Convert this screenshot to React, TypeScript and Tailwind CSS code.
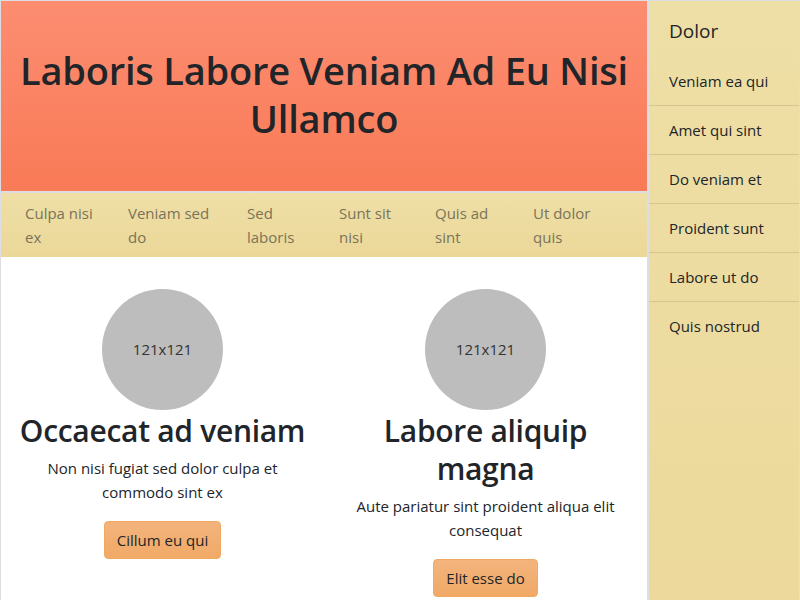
import React from "react";

const navItems = [
  { t: "Culpa nisi ex", w: "w-[103px]" },
  { t: "Veniam sed do", w: "w-[119px]" },
  { t: "Sed laboris", w: "w-[92px]" },
  { t: "Sunt sit nisi", w: "w-[96px]" },
  { t: "Quis ad sint", w: "w-[98px]" },
  { t: "Ut dolor quis", w: "w-[80px]" },
];

const side = ["Veniam ea qui", "Amet qui sint", "Do veniam et", "Proident sunt", "Labore ut do", "Quis nostrud"];

function Card({ title, text, btn }: { title: string; text: string; btn: string }) {
  return (
    <div className="flex flex-col items-center px-[12px] text-center">
      <div className="w-[121px] h-[121px] rounded-full bg-[#bdbdbd] flex items-center justify-center text-[15px] text-[#333]">
        121x121
      </div>
      <h2 className="mt-[2px] text-[30px] leading-[38px] font-semibold tracking-[-0.3px] text-[#212529]">{title}</h2>
      <p className="mt-[6px] text-[15px] leading-[24px] text-[#212529]">{text}</p>
      <button className="mt-[17px] h-[38px] px-[12px] rounded-[4px] bg-gradient-to-b from-[#f3b47d] to-[#f1a966] border border-[#f0a862] text-[15px] text-[#212529]">
        {btn}
      </button>
    </div>
  );
}

export default function App() {
  return (
    <div
      className="w-[800px] h-[600px] bg-[#dcdee3] p-[1px] pb-0 flex gap-[2px] overflow-hidden"
      style={{ fontFamily: '"Open Sans", "Noto Sans", sans-serif' }}
    >
      <div className="w-[646px] flex flex-col">
        <div className="h-[190px] bg-gradient-to-b from-[#fc8d71] to-[#f97a56] flex items-center justify-center px-[12px] pb-[5px]">
          <h1 className="text-[38px] leading-[48px] font-semibold text-[#212529] text-center tracking-[-0.2px]">
            Laboris Labore Veniam Ad Eu Nisi Ullamco
          </h1>
        </div>
        <div className="mt-[2px] h-[64px] bg-gradient-to-b from-[#efdfa6] to-[#ebd899] flex items-center pl-[24px]">
          {navItems.map((n) => (
            <div key={n.t} className={`${n.w} shrink-0 pr-[20px] text-[15px] leading-[24px] text-[#7a735a]`}>
              {n.t}
            </div>
          ))}
        </div>
        <div className="flex-1 bg-white grid grid-cols-2 pt-[32px]">
          <Card title="Occaecat ad veniam" text="Non nisi fugiat sed dolor culpa et commodo sint ex" btn="Cillum eu qui" />
          <Card title="Labore aliquip magna" text="Aute pariatur sint proident aliqua elit consequat" btn="Elit esse do" />
        </div>
      </div>
      <div className="w-[150px] bg-gradient-to-b from-[#eedfa6] to-[#ecd99b] flex flex-col">
        <div className="pl-[20px] pt-[18px] pb-[14px] text-[19px] leading-[24px] text-[#212529]">Dolor</div>
        {side.map((s, i) => (
          <div
            key={s}
            className={`pl-[20px] py-[12px] text-[15px] leading-[24px] text-[#212529] ${i < side.length - 1 ? "border-b border-[#d4c591]" : ""}`}
          >
            {s}
          </div>
        ))}
      </div>
    </div>
  );
}
